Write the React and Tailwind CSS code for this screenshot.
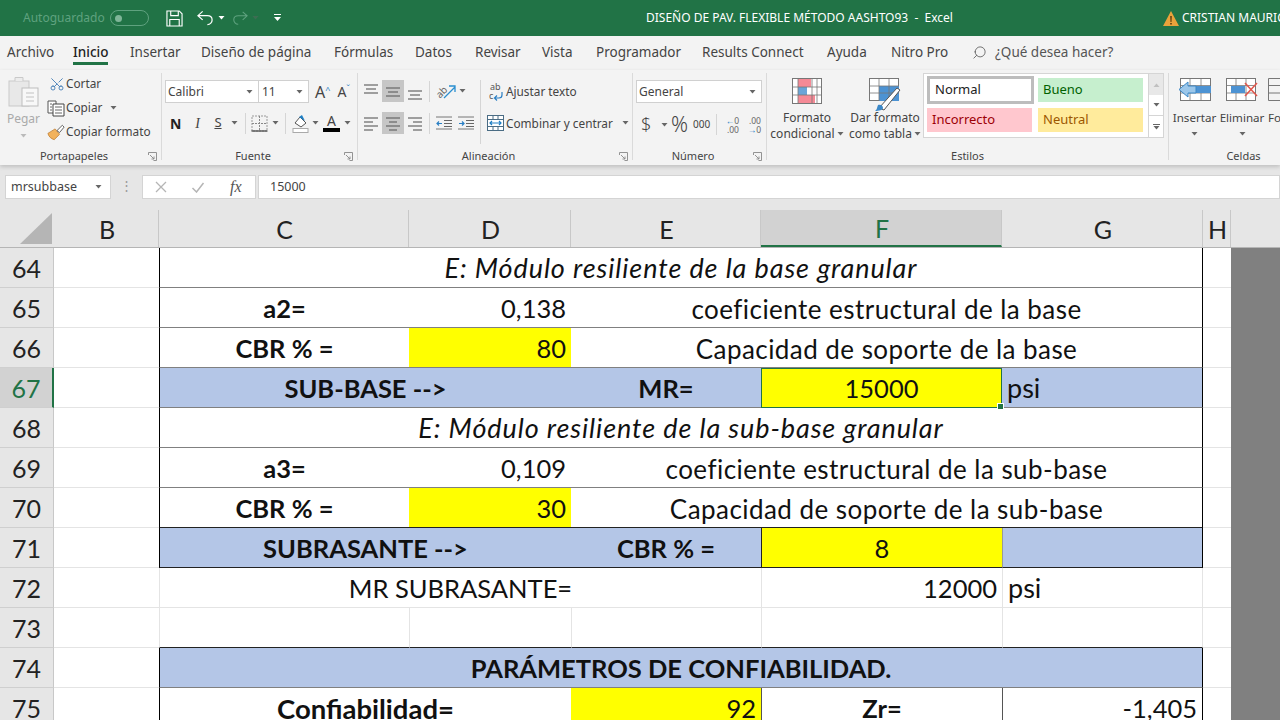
import { Scissors, Search } from 'lucide-react';

const ui = "[font-family:'Noto_Sans',sans-serif]";
const rowGrid = 'grid grid-cols-[54px_105px_250px_162px_190px_241px_201px_28px_49px] grid-rows-[40px] h-10 leading-none';

const Caret = ({ className = '' }) => (
  <svg width="7" height="4" viewBox="0 0 7 4" className={`shrink-0 ${className}`}>
    <path d="M0.5 0h6L3.5 3.5z" fill="#666" />
  </svg>
);

const Launcher = () => (
  <svg width="9" height="9" viewBox="0 0 9 9" className="shrink-0 mr-1">
    <path d="M0.5 3V0.5H8.5V8.5H5.5M2 3l4 4M6 4.5V7H3.5" fill="none" stroke="#888" strokeWidth="0.9" />
  </svg>
);

const PasteIcon = () => (
  <svg width="32" height="34" viewBox="0 0 32 34">
    <rect x="1" y="6" width="20" height="25" fill="#e8e8e8" stroke="#c9c9c9" />
    <path d="M7 6V2.5h8V6" fill="#ececec" stroke="#c9c9c9" />
    <rect x="14" y="13" width="16" height="18" fill="#f8f8f8" stroke="#bdbdbd" />
    <path d="M18 18h8M18 22h8M18 26h8" stroke="#c2c2c2" />
  </svg>
);

const CopyIcon = () => (
  <svg width="18" height="17" viewBox="0 0 18 17">
    <path d="M1 1h8v12H1z" fill="#fff" stroke="#555" />
    <path d="M6 4h11v12H6z" fill="#fff" stroke="#444" />
    <path d="M8 7h7M8 10h7M8 13h7M3 4h2M3 7h2M3 10h2" stroke="#666" />
  </svg>
);

const BrushIcon = () => (
  <svg width="18" height="17" viewBox="0 0 20 18">
    <path d="M1 10l8-5 5 6-6 6C5 16 2 14 1 10z" fill="#f2b25c" stroke="#b9772a" strokeWidth="0.8" />
    <path d="M11 7l6-6 2 2-5 6z" fill="#fff" stroke="#555" />
  </svg>
);

// lineas de alineacion, cada una con su ancho
const Lines = ({ rows, active = false, color = '#666' }) => (
  <div className={`w-[22px] h-[22px] flex items-center justify-center ${active ? 'bg-[#c6c6c6]' : ''}`}>
    <svg width="16" height="17" viewBox="0 0 16 17">
      {rows.map(([x1, x2, y], i) => (
        <path key={i} d={`M${x1} ${y}H${x2}`} stroke={color} strokeWidth="1.2" />
      ))}
    </svg>
  </div>
);

const Indent = ({ flip = false }) => (
  <svg width="16" height="14" viewBox="0 0 16 14" className="shrink-0">
    <path d="M8 4.500h8M8 7.500h8M8 10.500h8" stroke="#666" strokeWidth="1" />
    <path d="M0 1H16M0 13H16" stroke="#777" strokeWidth="1" />
    {flip ? (
      <path d="M1 7.500h5M4 5.500l2 2-2 2" fill="none" stroke="#2a7fc4" strokeWidth="1.2" />
    ) : (
      <path d="M1 7.500h5M3 5.500l-2 2 2 2" fill="none" stroke="#2a7fc4" strokeWidth="1.2" />
    )}
  </svg>
);

const WrapIcon = () => (
  <svg width="15" height="19" viewBox="0 0 15 19" className="shrink-0">
    <text x="1" y="8" fontSize="9" fill="#555" fontFamily="Noto Sans, sans-serif">ab</text>
    <text x="0" y="17" fontSize="9" fill="#555" fontFamily="Noto Sans, sans-serif">c</text>
    <path d="M13 10v3c0 2-1 3-3 3H6M8 13.500L5.500 16 8 18.500" fill="none" stroke="#2a7fc4" strokeWidth="1.2" />
  </svg>
);

const MergeIcon = () => (
  <svg width="17" height="16" viewBox="0 0 17 16" className="shrink-0">
    <rect x="0.500" y="0.500" width="16" height="15" fill="#fff" stroke="#4a6c84" />
    <path d="M0 4.500h17M0 11.500h17M6 0v4M11 0v4M6 12v4M11 12v4" stroke="#4a6c84" />
    <path d="M3 8h11M5 6L3 8l2 2M12 6l2 2-2 2" fill="none" stroke="#1f7fc4" strokeWidth="1.2" />
  </svg>
);

const AngleIcon = () => (
  <svg width="22" height="22" viewBox="0 0 22 22" className="shrink-0">
    <text x="0" y="15" fontSize="10" fill="#666" transform="rotate(-45 7 11)" fontFamily="Noto Sans, sans-serif">ab</text>
    <path d="M9 18L20 7M14 6h6v6" fill="none" stroke="#2a8fd0" strokeWidth="1.3" />
  </svg>
);

const BorderIcon = () => (
  <svg width="17" height="17" viewBox="0 0 17 17" className="shrink-0">
    <path d="M1 1h15v15H1z" fill="none" stroke="#999" strokeDasharray="2 1" />
    <path d="M8.500 1v15M1 8.500h15" stroke="#888" strokeDasharray="2 1" />
    <path d="M0.500 16h16" stroke="#555" strokeWidth="1.4" />
  </svg>
);

const FillIcon = () => (
  <svg width="18" height="19" viewBox="0 0 18 19" className="shrink-0">
    <path d="M3 9l5-6 6 6-5 4z" fill="#fff" stroke="#555" />
    <path d="M7 3l3-2 3 6" fill="#1f7fc4" />
    <rect x="1" y="14.500" width="15" height="4" fill="#fff" stroke="#aaa" />
  </svg>
);

const CondIcon = () => (
  <svg width="30" height="26" viewBox="0 0 30 26">
    <rect x="0.500" y="0.500" width="29" height="25" fill="#fff" stroke="#777" />
    <rect x="6" y="1" width="13" height="8" fill="#f58a96" />
    <rect x="6" y="9" width="9" height="8" fill="#6aa5d8" />
    <rect x="6" y="17" width="17" height="8" fill="#f58a96" />
    <path d="M0 9h30M0 17h30M6 0v26M20 0v26M25 0v26" stroke="#777" strokeWidth="0.8" />
  </svg>
);

const TableIcon = () => (
  <svg width="32" height="34" viewBox="0 0 32 34">
    <rect x="0.500" y="0.500" width="29" height="22" fill="#fff" stroke="#777" />
    <rect x="10" y="8" width="20" height="15" fill="#4d93d3" />
    <path d="M0 8h30M0 15h30M10 0v23M20 0v23" stroke="#777" strokeWidth="0.8" />
    <path d="M10 30L28 10l3 2-16 20z" fill="#fff" stroke="#555" />
    <path d="M9 27c3-1 5 1 5 3s-4 3-8 3c2-1 2-4 3-6z" fill="#3b88c8" />
  </svg>
);

const InsertIcon = () => (
  <svg width="34" height="23" viewBox="0 0 34 23">
    <rect x="2.500" y="0.500" width="30" height="22" fill="#fff" stroke="#777" />
    <path d="M2 7.500h31M2 15h31M12 0v23M23 0v23" stroke="#777" strokeWidth="0.8" />
    <rect x="9" y="8" width="24" height="7" fill="#4d93d3" />
    <path d="M10 4L1 11.500 10 19v-4h8V8h-8z" fill="#9cc7ea" stroke="#3b88c8" />
  </svg>
);

const DeleteIcon = () => (
  <svg width="32" height="23" viewBox="0 0 32 23">
    <rect x="0.500" y="0.500" width="29" height="22" fill="#fff" stroke="#777" />
    <path d="M0 7.500h30M0 15h30M10 0v23M20 0v23" stroke="#777" strokeWidth="0.8" />
    <rect x="5" y="8" width="14" height="7" fill="#4d93d3" />
    <path d="M19 5l12 13M31 5L19 18" stroke="#e2574c" strokeWidth="1.6" />
  </svg>
);

const FormatIcon = () => (
  <svg width="12" height="23" viewBox="0 0 12 23">
    <path d="M12 0.500H0.500V22.500H12M0 7.500h12M0 15h12" fill="none" stroke="#777" />
  </svg>
);

const Group = ({ width, label, launcher = true, children }) => (
  <div className={`${width} shrink-0 flex flex-col border-r border-[#dadada] mt-[3px] mb-[5px]`}>
    <div className="flex-1 min-h-0">{children}</div>
    <div className="h-2 flex items-center text-[11px] text-[#444]">
      <span className="flex-1 text-center">{label}</span>
      {launcher && <Launcher />}
    </div>
  </div>
);

const TitleBar = () => (
  <div className={`${ui} h-9 bg-[#217346] text-white flex items-center overflow-hidden`}>
    <div className="w-[646px] shrink-0 flex items-center pl-[23px]">
      <span className="text-[12px] text-[#5fa27f]">Autoguardado</span>
      <span className="ml-[5px] w-[39px] h-4 rounded-full border border-[#5fa27f] flex items-center pl-1">
        <span className="w-[7px] h-[7px] rounded-full bg-[#7fb598]" />
      </span>
      <svg width="17" height="17" viewBox="0 0 18 18" className="ml-[17px]">
        <path d="M1 1h13l3 3v13H1zM5 1v5h8V1M4 17v-7h10v7" fill="none" stroke="#fff" strokeWidth="1.200" />
      </svg>
      <svg width="17" height="16" viewBox="0 0 18 16" className="ml-[14px]">
        <path d="M6 1L1 5.500 6 10M1 5.500h10c3 0 5 2 5 4.500s-2 5-5 5" fill="none" stroke="#fff" strokeWidth="1.300" />
      </svg>
      <Caret className="ml-1 brightness-[4]" />
      <svg width="16" height="16" viewBox="0 0 18 16" className="ml-[7px]">
        <path d="M12 1l5 4.500L12 10M17 5.500H7c-3 0-5 2-5 4.500s2 5 5 5" fill="none" stroke="#5fa27f" strokeWidth="1.200" />
      </svg>
      <Caret className="ml-1 opacity-40" />
      <svg width="7" height="8" viewBox="0 0 7 8" className="ml-[15px]">
        <path d="M0 0h7v1H0zM0 3h7L3.500 7z" fill="#fff" />
      </svg>
    </div>
    <span className="text-[12px] whitespace-pre shrink-0">DISEÑO DE PAV. FLEXIBLE MÉTODO AASHTO93  -  Excel</span>
    <div className="ml-[210px] flex items-center shrink-0">
      <svg width="16" height="15" viewBox="0 0 16 15">
        <path d="M8 0l8 15H0z" fill="#e9a23b" />
        <path d="M7.200 5h1.600l-.3 6h-1zM7.200 12h1.600v1.600H7.200z" fill="#5a3c10" />
      </svg>
      <span className="ml-[3px] text-[12px] whitespace-nowrap">CRISTIAN MAURICIO</span>
    </div>
  </div>
);

const tabs = [
  ['Archivo', 'w-[66px]'],
  ['Inicio', 'w-[57px]'],
  ['Insertar', 'w-[71px]'],
  ['Diseño de página', 'w-[133px]'],
  ['Fórmulas', 'w-[81px]'],
  ['Datos', 'w-[60px]'],
  ['Revisar', 'w-[67px]'],
  ['Vista', 'w-[54px]'],
  ['Programador', 'w-[106px]'],
  ['Results Connect', 'w-[125px]'],
  ['Ayuda', 'w-[64px]'],
  ['Nitro Pro', 'w-[81px]']
];

const Tabs = () => (
  <div className={`${ui} h-[34px] bg-[#f3f3f3] flex items-start pl-[7px] text-[13.5px] text-[#444]`}>
    {tabs.map(([tab, width]) => (
      <div key={tab} className={`${width} shrink-0`}>
        <span className={`inline-flex h-[29px] items-center whitespace-nowrap border-b-[3px] pt-[7px] ${tab === 'Inicio' ? 'border-[#217346] font-medium text-[#222]' : 'border-transparent'}`}>
          {tab}
        </span>
      </div>
    ))}
    <span className="flex items-center h-[32px] gap-2 text-[#555]">
      <Search size={15} strokeWidth={1.3} className="-scale-x-100" />
      ¿Qué desea hacer?
    </span>
  </div>
);

const Clipboard = () => (
  <div className="flex h-full">
    <div className="w-[47px] flex flex-col items-center pt-[2px] text-[12px] text-[#aaa]">
      <PasteIcon />
      <span className="mt-px">Pegar</span>
      <Caret className="mt-[6px] opacity-40" />
    </div>
    <div className="flex flex-col -mt-px text-[11.8px] text-[#444]">
      <div className="h-6 flex items-center">
        <span className="w-[19px] flex justify-center">
          <Scissors size={16} strokeWidth={1.3} className="text-[#3c79b4] -rotate-90" />
        </span>
        <span>Cortar</span>
      </div>
      <div className="h-6 flex items-center">
        <span className="w-[19px] flex"><CopyIcon /></span>
        <span>Copiar</span>
        <Caret className="ml-2" />
      </div>
      <div className="h-6 flex items-center">
        <span className="w-[19px] flex"><BrushIcon /></span>
        <span className="whitespace-nowrap">Copiar formato</span>
      </div>
    </div>
  </div>
);

const Font = () => (
  <div className="pl-[3px] pt-[7px] pr-1 text-[12px] text-[#444]">
    <div className="flex items-center h-[23px]">
      <div className="w-[94px] h-full bg-white border border-[#d0d0d0] flex items-center justify-between px-[2px] pr-[5px]">
        <span>Calibri</span>
        <Caret />
      </div>
      <div className="w-[50px] h-full bg-white border border-l-0 border-[#d0d0d0] flex items-center justify-between px-[3px] pr-[5px]">
        <span>11</span>
        <Caret />
      </div>
      <span className="ml-1.5 text-[16px] leading-none">A<sup className="text-[9px] text-[#2a7fc4]">^</sup></span>
      <span className="ml-[7px] text-[14px] leading-none">A<sup className="text-[9px] text-[#2a7fc4]">ˇ</sup></span>
    </div>
    <div className="flex items-center h-[24px] mt-[8px] pl-[5px]">
      <span className="text-[14px] font-bold text-[#222] w-[19px]">N</span>
      <span className="text-[14px] italic [font-family:'Liberation_Serif',serif] w-[17px] text-center">I</span>
      <span className="text-[13px] underline w-[24px] text-center">S</span>
      <Caret className="ml-px" />
      <span className="w-px h-[21px] bg-[#d5d5d5] ml-[7px] mr-[5px]" />
      <BorderIcon />
      <Caret className="ml-[4px]" />
      <span className="w-px h-[21px] bg-[#d5d5d5] mx-[6px]" />
      <FillIcon />
      <Caret className="ml-[2px]" />
      <span className="ml-[4px] w-[17px] flex flex-col items-center text-[14px] leading-[14px]">
        A
        <span className="w-full h-1 bg-black" />
      </span>
      <Caret className="ml-[4px]" />
    </div>
  </div>
);

const Alignment = () => (
  <div className="flex pt-[7px] pl-[2px] text-[11.8px] text-[#444]">
    <div className="flex flex-col gap-[10px] w-[120px]">
      <div className="flex items-center h-[22px]">
        <Lines rows={[[1, 15, 2], [3, 13, 6], [1, 15, 10]]} />
        <Lines active rows={[[1, 15, 5], [3, 13, 9], [1, 15, 13]]} />
        <Lines rows={[[1, 15, 8], [3, 13, 12], [1, 15, 16]]} />
        <span className="w-px h-[21px] bg-[#d5d5d5] ml-[3px] mr-[5px]" />
        <AngleIcon />
        <Caret className="ml-[2px]" />
      </div>
      <div className="flex items-center h-[22px]">
        <Lines rows={[[1, 15, 3], [1, 10, 7], [1, 15, 11], [1, 10, 15]]} />
        <Lines active rows={[[1, 15, 3], [4, 12, 7], [1, 15, 11], [4, 12, 15]]} />
        <Lines rows={[[1, 15, 3], [6, 15, 7], [1, 15, 11], [6, 15, 15]]} />
        <span className="w-px h-[21px] bg-[#d5d5d5] ml-[3px] mr-[6px]" />
        <Indent />
        <span className="w-[6px] shrink-0" />
        <Indent flip />
      </div>
    </div>
    <div className="border-l border-[#d5d5d5] pl-[6px] h-[64px] flex flex-col gap-[10px]">
      <div className="h-[22px] flex items-center gap-[2px] pl-[2px]">
        <WrapIcon />
        <span className="whitespace-nowrap pt-px">Ajustar texto</span>
      </div>
      <div className="h-[22px] flex items-center gap-[2px]">
        <MergeIcon />
        <span className="whitespace-nowrap pt-px">Combinar y centrar</span>
        <Caret className="ml-[7px]" />
      </div>
    </div>
  </div>
);

const Numbers = () => (
  <div className="pt-[7px] pl-[3px] text-[12px] text-[#444]">
    <div className="w-[126px] h-[23px] bg-white border border-[#d0d0d0] flex items-center justify-between pl-[2px] pr-[5px]">
      <span>General</span>
      <Caret />
    </div>
    <div className="flex items-center h-[25px] mt-[9px] pl-[5px]">
      <span className="text-[18px] font-light w-[12px]">$</span>
      <Caret className="ml-[8px]" />
      <span className="text-[21px] font-light leading-none ml-[3px] w-[20px]">%</span>
      <span className="text-[10px] ml-[2px] w-[18px]">000</span>
      <span className="w-px h-[21px] bg-[#d5d5d5] mx-[5px]" />
      <span className="w-[17px] text-[8.5px] leading-[9px] text-right text-[#666]"><span className="text-[#2a7fc4]">←</span>0<br />.00</span>
      <span className="w-[17px] ml-[5px] text-[8.5px] leading-[9px] text-right text-[#666]">.00<br /><span className="text-[#2a7fc4]">→</span>0</span>
    </div>
  </div>
);

const StyleChip = ({ className, children }) => (
  <div className={`flex items-center pl-[5px] text-[13px] ${className}`}>{children}</div>
);

const Styles = () => (
  <div className="flex h-full text-[12px] text-[#444]">
    <div className="w-[80px] flex flex-col items-center pt-[5px] leading-[16px]">
      <CondIcon />
      <span className="mt-[6px]">Formato</span>
      <span className="flex items-center gap-[2px] whitespace-nowrap">condicional<Caret /></span>
    </div>
    <div className="w-[76px] flex flex-col items-center pt-[5px] leading-[16px]">
      <TableIcon />
      <span className="-mt-[2px] whitespace-nowrap">Dar formato</span>
      <span className="flex items-center gap-[2px] whitespace-nowrap">como tabla<Caret /></span>
    </div>
    <div className="w-[241px] h-[65px] flex border border-[#d5d5d5] bg-white">
      <div className="w-[224px] grid grid-cols-[105px_105px] grid-rows-[24px_24px] gap-x-[6px] gap-y-[6px] pl-[3px] pt-[4px]">
        <StyleChip className="border-[3px] border-[#bdbdbd] -mt-[2px] -mb-[2px] -mr-[2px] pl-[2px] text-[#222]">Normal</StyleChip>
        <StyleChip className="bg-[#c6efce] text-[#006100]">Bueno</StyleChip>
        <StyleChip className="bg-[#ffc7ce] text-[#9c0006]">Incorrecto</StyleChip>
        <StyleChip className="bg-[#ffeb9c] text-[#9c5700]">Neutral</StyleChip>
      </div>
      <div className="flex-1 border-l border-[#d5d5d5] flex flex-col">
        <div className="h-[21px] bg-[#e8e8e8] flex items-center justify-center"><Caret className="rotate-180 opacity-30" /></div>
        <div className="h-[21px] border-b border-[#d5d5d5] flex items-center justify-center"><Caret /></div>
        <div className="flex-1 flex flex-col items-center justify-center gap-px">
          <span className="w-[7px] h-px bg-[#666]" />
          <Caret />
        </div>
      </div>
    </div>
  </div>
);

const Cells = () => (
  <div className="flex pl-[4px] pt-[5px] gap-[4px] text-[11.6px] text-[#444] leading-[16px] whitespace-nowrap">
    <div className="w-[43px] flex flex-col items-center">
      <InsertIcon />
      <span className="mt-[9px]">Insertar</span>
      <Caret className="mt-[6px]" />
    </div>
    <div className="w-[44px] flex flex-col items-center">
      <DeleteIcon />
      <span className="mt-[9px]">Eliminar</span>
      <Caret className="mt-[6px]" />
    </div>
    <div className="flex flex-col items-start">
      <FormatIcon />
      <span className="mt-[9px]">Formato</span>
    </div>
  </div>
);

const Ribbon = () => (
  <div className={`${ui} h-[95px] bg-[#f3f3f3] flex overflow-hidden shadow-[0_2px_4px_#c0c0c0] relative`}>
    <Group width="w-[162px]" label="Portapapeles"><Clipboard /></Group>
    <Group width="w-[196px]" label="Fuente"><Font /></Group>
    <Group width="w-[275px]" label="Alineación"><Alignment /></Group>
    <Group width="w-[134px]" label="Número"><Numbers /></Group>
    <Group width="w-[402px]" label="Estilos" launcher={false}><Styles /></Group>
    <Group width="w-[150px]" label="Celdas" launcher={false}><Cells /></Group>
  </div>
);

const FormulaBar = () => (
  <div className={`${ui} h-[45px] bg-[#e6e6e6] flex items-start pt-[10px] pl-[5px] text-[12.500px] text-[#444]`}>
    <div className="w-[106px] h-[24px] bg-white border border-[#d4d4d4] flex items-center justify-between pl-[5px] pr-[8px]">
      <span className="pt-px">mrsubbase</span>
      <Caret />
    </div>
    <span className="w-[31px] text-center text-[#999] leading-[22px]">⋮</span>
    <div className="w-[114px] h-[24px] bg-white border border-[#d4d4d4] flex items-center text-[#aaa]">
      <svg width="12" height="12" viewBox="0 0 12 12" className="ml-[12px]">
        <path d="M1 1l10 10M11 1L1 11" stroke="#b5b5b5" strokeWidth="1.300" />
      </svg>
      <svg width="14" height="11" viewBox="0 0 13 11" className="ml-[24px]">
        <path d="M1 6l4 4 7-9" fill="none" stroke="#b5b5b5" strokeWidth="1.500" />
      </svg>
      <span className="ml-[25px] italic text-[16px] text-[#555] [font-family:'Liberation_Serif',serif]">fx</span>
    </div>
    <div className="flex-1 h-[24px] ml-[2px] bg-white border border-[#d4d4d4] flex items-center pl-[11px] pt-px">15000</div>
  </div>
);

const HeadCell = ({ active = false, children }) => (
  <div className={`h-[37px] flex items-center justify-center pt-[3px] pl-[2px] text-[25px] border-r border-[#c8c8c8] ${active ? 'bg-[#d2d2d2] border-b-2 border-b-[#217346] text-[#217346]' : 'text-[#222]'}`}>
    {children}
  </div>
);

const ColumnHeader = () => (
  <div className="grid grid-cols-[54px_105px_250px_162px_190px_241px_201px_28px_49px] h-[38px] bg-[#e6e6e6] border-b border-[#b5b5b5]">
    <div className="h-[37px] flex items-end justify-end pr-[2px] pb-[3px]">
      <svg width="32" height="31" viewBox="0 0 32 31">
        <path d="M32 0v31H0z" fill="#b5b5b5" />
      </svg>
    </div>
    {['B', 'C', 'D', 'E', 'F', 'G', 'H'].map((col) => (
      <HeadCell key={col} active={col === 'F'}>{col}</HeadCell>
    ))}
    <div />
  </div>
);

const Row = ({ num, active = false, children }) => (
  <div className={rowGrid}>
    <div className={`flex items-center justify-center pt-px text-[25px] border-b border-[#cfcfcf] ${active ? 'bg-[#d2d2d2] border-r-2 border-r-[#217346] text-[#217346]' : 'bg-[#e6e6e6] text-[#222] border-r border-r-[#c8c8c8]'}`}>
      {num}
    </div>
    <div className="border-b border-[#e4e4e4]" />
    {children}
    <div className="border-b border-[#e4e4e4]" />
    <div className="bg-[#808080]" />
  </div>
);

const Cell = ({ span = '', className = '', children }) => (
  <div className={`flex items-center min-w-0 whitespace-nowrap ${span} ${className}`}>{children}</div>
);

const line = 'border-b border-[#808080]';
const black = 'border-b border-[#222]';
const faint = 'border-b border-[#e4e4e4]';
const noteText = 'pt-[2px] text-[26px] tracking-[0.45px]';
const titleText = 'text-[27px] tracking-[0.9px] italic';
const psiText = 'text-[27px]';

const NoteRow = ({ num, label, value, note }) => (
  <Row num={num}>
    <Cell className={`${line} pt-[2px] border-l border-l-black justify-center font-bold`}>{label}</Cell>
    <Cell className={`${line} pt-[2px] justify-end pr-[5px]`}>{value}</Cell>
    <Cell span="col-span-3" className={`${line} ${noteText} border-r border-r-black justify-center`}>{note}</Cell>
  </Row>
);

const CbrRow = ({ num, value, note, bottom = line }) => (
  <Row num={num}>
    <Cell className={`${bottom} pt-[2px] border-l border-l-black justify-center font-bold`}>CBR % =</Cell>
    <Cell className={`${bottom} pt-[2px] bg-[#ffff00] justify-end pr-[5px]`}>{value}</Cell>
    <Cell span="col-span-3" className={`${bottom} ${noteText} border-r border-r-black justify-center`}>{note}</Cell>
  </Row>
);

const Sheet = () => (
  <div className="[font-family:Lato,sans-serif] text-[25.5px] text-[#111] bg-white">
    <ColumnHeader />
    <Row num="64">
      <Cell span="col-span-5" className={`${line} ${titleText} border-x border-x-black justify-center`}>E: Módulo resiliente de la base granular</Cell>
    </Row>
    <NoteRow num="65" label="a2=" value="0,138" note="coeficiente estructural de la base" />
    <CbrRow num="66" value="80" note="Capacidad de soporte de la base" />
    <Row num="67" active>
      <Cell span="col-span-2" className={`${line} pt-[2px] border-l border-l-black bg-[#b4c6e7] justify-center font-bold`}>SUB-BASE --&gt;</Cell>
      <Cell className={`${line} pt-[2px] bg-[#b4c6e7] justify-center font-bold`}>MR=</Cell>
      <Cell className="relative pt-px bg-[#ffff00] border-[1.5px] border-[#217346] justify-center">
        15000
        <span className="absolute -right-[3px] -bottom-[3px] w-[5px] h-[5px] bg-[#217346] border border-white box-content" />
      </Cell>
      <Cell className={`${line} ${psiText} border-r border-r-black bg-[#b4c6e7] pl-[5px]`}>psi</Cell>
    </Row>
    <Row num="68">
      <Cell span="col-span-5" className={`${line} ${titleText} border-x border-x-black justify-center`}>E: Módulo resiliente de la sub-base granular</Cell>
    </Row>
    <NoteRow num="69" label="a3=" value="0,109" note="coeficiente estructural de la sub-base" />
    <CbrRow num="70" value="30" note="Capacidad de soporte de la sub-base" bottom={black} />
    <Row num="71">
      <Cell span="col-span-2" className={`${black} pt-[2px] border-l border-l-black bg-[#b4c6e7] justify-center font-bold`}>SUBRASANTE --&gt;</Cell>
      <Cell className={`${black} pt-[2px] bg-[#b4c6e7] justify-center font-bold`}>CBR % =</Cell>
      <Cell className={`${black} pt-[2px] border-l border-l-[#222] bg-[#ffff00] justify-center`}>8</Cell>
      <Cell className={`${black} border-x border-l-[#999] border-r-black bg-[#b4c6e7]`} />
    </Row>
    <Row num="72">
      <Cell span="col-span-3" className={`${faint} pt-[2px] border-l border-l-[#e4e4e4] justify-center`}>MR SUBRASANTE=</Cell>
      <Cell className={`${faint} pt-[2px] border-l border-l-[#e4e4e4] justify-end pr-[5px]`}>12000</Cell>
      <Cell className={`${faint} ${psiText} border-x border-x-[#e4e4e4] pl-[5px]`}>psi</Cell>
    </Row>
    <Row num="73">
      <Cell className={`${black} border-l border-l-[#e4e4e4]`} />
      <Cell className={`${black} border-l border-l-[#e4e4e4]`} />
      <Cell className={`${black} border-l border-l-[#e4e4e4]`} />
      <Cell className={`${black} border-l border-l-[#e4e4e4]`} />
      <Cell className={`${black} border-x border-x-[#e4e4e4]`} />
    </Row>
    <Row num="74">
      <Cell span="col-span-5" className={`${line} pt-[2px] border-x border-x-black bg-[#b4c6e7] justify-center font-bold`}>PARÁMETROS DE CONFIABILIDAD.</Cell>
    </Row>
    <Row num="75">
      <Cell span="col-span-2" className="pt-[2px] text-[27.5px] border-l border-l-black justify-center font-bold">Confiabilidad=</Cell>
      <Cell className="pt-[2px] bg-[#ffff00] justify-end pr-[5px]">92</Cell>
      <Cell className="pt-[2px] border-l border-l-[#555] justify-center font-bold">Zr=</Cell>
      <Cell className="pt-[2px] border-x border-l-[#555] border-r-black justify-end pr-[5px]">-1,405</Cell>
    </Row>
  </div>
);

export default function App() {
  return (
    <div className="h-screen w-[1280px] overflow-hidden bg-white">
      <TitleBar />
      <Tabs />
      <Ribbon />
      <FormulaBar />
      <Sheet />
    </div>
  );
}
